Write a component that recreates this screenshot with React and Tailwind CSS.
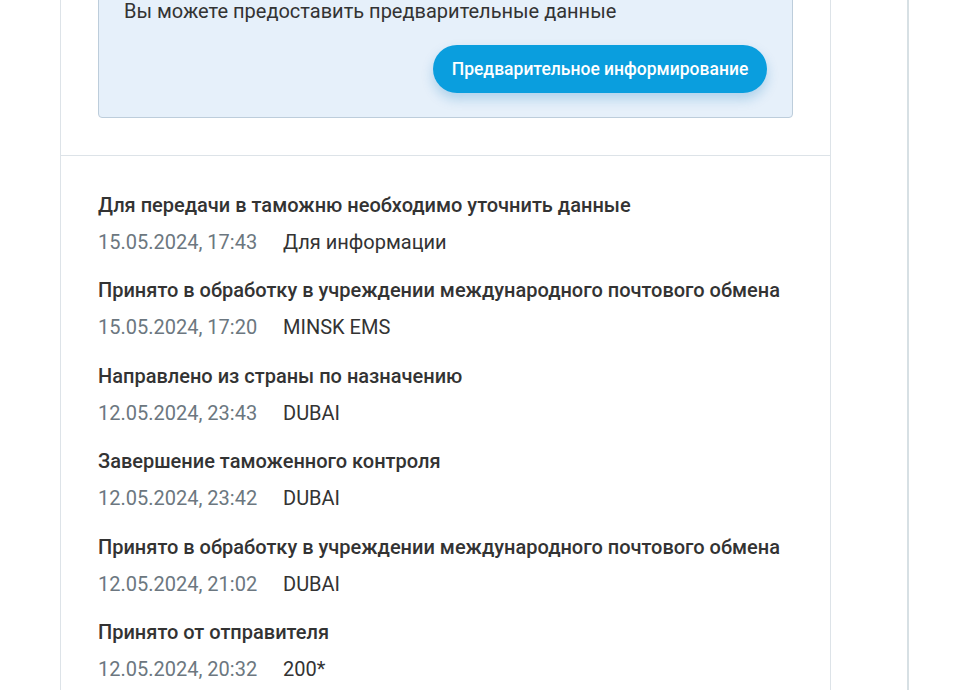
const events = [
	{ title: 'Для передачи в таможню необходимо уточнить данные', date: '15.05.2024, 17:43', place: 'Для информации' },
	{ title: 'Принято в обработку в учреждении международного почтового обмена', date: '15.05.2024, 17:20', place: 'MINSK EMS' },
	{ title: 'Направлено из страны по назначению', date: '12.05.2024, 23:43', place: 'DUBAI' },
	{ title: 'Завершение таможенного контроля', date: '12.05.2024, 23:42', place: 'DUBAI' },
	{ title: 'Принято в обработку в учреждении международного почтового обмена', date: '12.05.2024, 21:02', place: 'DUBAI' },
	{ title: 'Принято от отправителя', date: '12.05.2024, 20:32', place: '200*' },
]

export default function App() {
	return (
		<div
			className="flex h-[690px] w-[978px] overflow-hidden bg-white"
			style={{ fontFamily: 'Roboto, "Noto Sans", sans-serif' }}
		>
			<div className="w-[60px] shrink-0" />

			{/* карточка с историей */}
			<div className="w-[771px] shrink-0 border-x border-[#dde3e8]">
				<div className="px-[37px] pb-[37px]">
					<div className="-mt-[21px] rounded-[4px] border border-[#bdcddb] bg-[#e6f0fa] pl-[25px] pr-[25px] pt-[19px] pb-[24px]">
						<p className="text-[20px] leading-[24px] text-[#333]">
							Вы можете предоставить предварительные данные
						</p>
						<div className="mt-[22px] flex justify-end">
							<button className="h-[48px] w-[334px] rounded-full bg-[#0a9ede] text-[17.5px] font-medium text-white shadow-[0_6px_12px_rgba(10,120,190,0.25)]">
								Предварительное информирование
							</button>
						</div>
					</div>
				</div>

				<div className="border-t border-[#dde3e8] px-[37px] pt-[37px]">
					{events.map((e, i) => (
						<div key={i} className="mb-[24.4px]">
							<div className="mb-[13px] text-[20px] font-medium leading-[24px] text-[#333]">
								{e.title}
							</div>
							<div className="flex text-[20px] leading-[24px]">
								<span className="w-[185px] text-[#6c7780]">{e.date}</span>
								<span className="text-[#333]">{e.place}</span>
							</div>
						</div>
					))}
				</div>
			</div>

			<div className="ml-[76px] w-[2px] shrink-0 bg-[#d7e0e4]" />
		</div>
	)
}
